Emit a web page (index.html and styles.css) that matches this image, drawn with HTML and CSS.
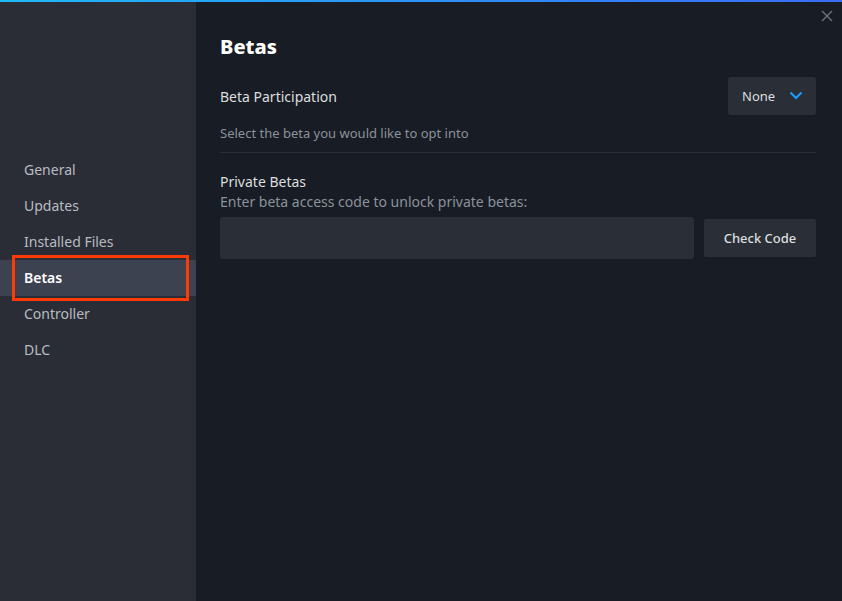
FILE: index.html
```html
<!DOCTYPE html>
<html lang="en">
<head>
    <meta charset="UTF-8">
    <title>Properties</title>
    <meta name="viewport" content="width=device-width, initial-scale=1.0">
    <link rel="stylesheet" href="styles.css">
</head>
<body>
<div class="window">
    <div class="top-line"></div>
    <div class="layout">
        <!-- Sidebar -->
        <nav class="sidebar">
            <div class="nav-item">General</div>
            <div class="nav-item">Updates</div>
            <div class="nav-item">Installed Files</div>
            <div class="nav-item active">Betas<span class="highlight-box"></span></div>
            <div class="nav-item">Controller</div>
            <div class="nav-item">DLC</div>
        </nav>

        <!-- Content -->
        <main class="content">
            <button type="button" class="close-btn" aria-label="Close">
                <svg width="12" height="12" viewBox="0 0 12 12">
                    <path d="M1 1 L11 11 M11 1 L1 11" stroke="#6d737b" stroke-width="1.4" fill="none"/>
                </svg>
            </button>
            <h1 class="title">Betas</h1>

            <div class="setting-row">
                <div class="setting-label">Beta Participation</div>
                <button type="button" class="dropdown">
                    <span>None</span>
                    <svg width="14" height="9" viewBox="0 0 14 9">
                        <path d="M1.5 1.5 L7 7 L12.5 1.5" stroke="#1a9fff" stroke-width="2" fill="none"/>
                    </svg>
                </button>
            </div>
            <p class="setting-desc">Select the beta you would like to opt into</p>
            <div class="divider"></div>

            <div class="private">
                <div class="setting-label">Private Betas</div>
                <p class="private-desc">Enter beta access code to unlock private betas:</p>
                <div class="code-row">
                    <input type="text" class="code-input">
                    <button type="button" class="check-btn">Check Code</button>
                </div>
            </div>
        </main>
    </div>
</div>
</body>
</html>
```

FILE: styles.css
```css
html, body {
    margin: 0;
    padding: 0;
    height: 100%;
}
body {
    font-family: "Noto Sans", "Open Sans", sans-serif;
    background-color: #181c24;
    color: #dcdedf;
}
.window {
    height: 100%;
    display: flex;
    flex-direction: column;
}
.top-line {
    height: 2px;
    background: linear-gradient(to right, #1fb8f8, #3a6cf4);
}
.layout {
    flex: 1;
    display: flex;
}
.sidebar {
    width: 196px;
    background-color: #2a2d35;
    padding-top: 150px;
    box-sizing: border-box;
}
.nav-item {
    position: relative;
    height: 36px;
    line-height: 36px;
    padding-left: 24px;
    font-size: 14px;
    color: #b8bcc2;
}
.nav-item.active {
    background-color: #3d4250;
    color: #ffffff;
    font-weight: 600;
}
/* red annotation frame */
.highlight-box {
    position: absolute;
    left: 12px;
    top: -5px;
    width: 177px;
    height: 46px;
    box-sizing: border-box;
    border: 3px solid #ff3a05;
}
.content {
    position: relative;
    flex: 1;
    padding: 30px 26px 0 24px;
}
.close-btn {
    position: absolute;
    top: 8px;
    right: 8px;
    background: none;
    border: none;
    padding: 0;
    width: 14px;
    height: 14px;
}
.title {
    margin: 0;
    font-size: 20px;
    font-weight: 800;
    color: #ffffff;
    line-height: 30px;
}
.setting-row {
    margin-top: 15px;
    display: flex;
    justify-content: space-between;
    align-items: center;
}
.setting-label {
    font-size: 14px;
    color: #dcdedf;
}
.dropdown {
    width: 88px;
    height: 38px;
    background-color: #2a2e37;
    border: none;
    border-radius: 3px;
    display: flex;
    align-items: center;
    gap: 14px;
    padding-left: 14px;
    padding-bottom: 2px;
    font-family: inherit;
    font-size: 13px;
    color: #dcdedf;
}
.setting-desc {
    margin: 9px 0 0;
    font-size: 13px;
    color: #8b929a;
}
.divider {
    margin-top: 10px;
    height: 1px;
    background-color: #2a2e37;
}
.private {
    margin-top: 19px;
}
.private-desc {
    margin: 1px 0 0;
    font-size: 14px;
    color: #8b929a;
}
.code-row {
    margin-top: 6px;
    display: flex;
    align-items: center;
    gap: 10px;
}
.code-input {
    flex: 1;
    height: 42px;
    box-sizing: border-box;
    background-color: #2a2e37;
    border: none;
    border-radius: 3px;
    outline: none;
}
.check-btn {
    width: 112px;
    height: 38px;
    background-color: #2a2e37;
    border: none;
    border-radius: 2px;
    font-family: inherit;
    font-size: 13px;
    font-weight: 500;
    color: #dcdedf;
}
```
